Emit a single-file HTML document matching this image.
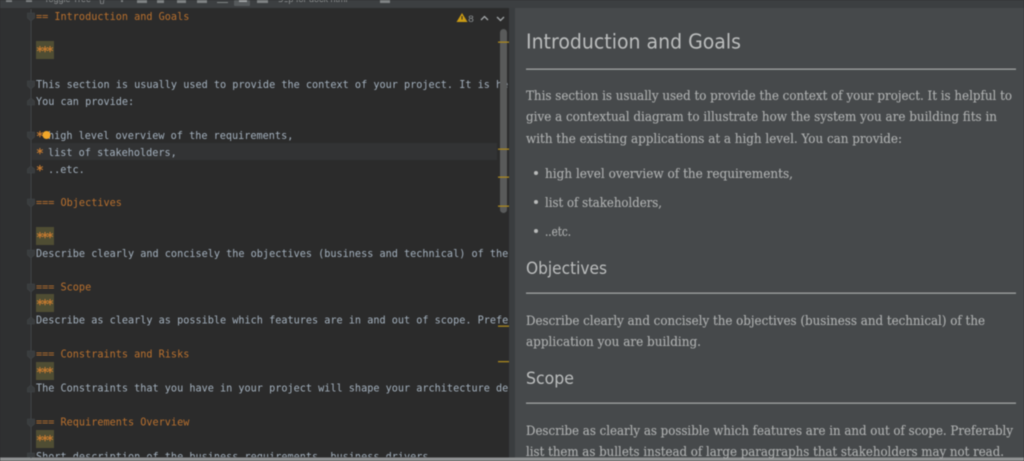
<!DOCTYPE html>
<html><head><meta charset="utf-8"><style>
html,body{margin:0;padding:0;background:#2b2b2b;width:1024px;height:461px;overflow:hidden}
svg{display:block;filter:blur(.5px)}
.m text{font-family:"DejaVu Sans Mono","Liberation Mono",monospace;font-size:10.2px;fill:#a3b0bd}
.m text.h{fill:#b8702e}
.m text.s{fill:#c47a30;font-size:13px;font-weight:bold}
.p{font-family:"DejaVu Serif","Liberation Serif",serif;font-size:13.4px;fill:#aeb0b0;stroke:#aeb0b0;stroke-width:.12px}
.t{font-family:"DejaVu Sans","Liberation Sans",sans-serif;fill:#bcbebe}
</style></head><body>
<svg width="1024" height="461" viewBox="0 0 1024 461" xmlns="http://www.w3.org/2000/svg">
<defs><clipPath id="c"><rect x="0" y="9" width="508.500" height="448"/></clipPath></defs>
<rect width="1024" height="461" fill="#2b2b2b"/>
<rect x="0" y="8" width="30" height="450" fill="#2f3031"/>
<rect x="0" y="0" width="1024" height="8" fill="#3c3f41"/>
<rect x="509" y="8" width="6" height="450" fill="#3a3d3f"/>
<rect x="515" y="8" width="509" height="450" fill="#46494b"/>
<rect x="0" y="457.500" width="1024" height="4" fill="#8f9192"/>
<!-- toolbar -->
<g fill="#7f8384">
<rect x="6" y="0" width="6" height="2"/><rect x="26" y="0" width="6" height="2"/>
<text x="44" y="2" font-family="Liberation Sans,sans-serif" font-size="9" fill="#8d9091">Toggle Tree</text>
<text x="99" y="2" font-family="Liberation Sans,sans-serif" font-size="9" fill="#8d9091">{}</text>
<rect x="121" y="0" width="2" height="2"/>
<rect x="137" y="0" width="10" height="3"/>
<rect x="157" y="0" width="7" height="3"/>
<rect x="177" y="0" width="9" height="3"/>
<rect x="197" y="0" width="10" height="3"/>
<rect x="217" y="2" width="11" height="1"/>
<rect x="234" y="0" width="16" height="6" rx="1" fill="#565a5c"/>
<rect x="239" y="0" width="8" height="2" fill="#a0a3a5"/>
<rect x="257" y="0" width="11" height="3"/>
<text x="278" y="2" font-family="Liberation Sans,sans-serif" font-size="9" fill="#8d9091">⎇p</text>
<text x="296" y="2" font-family="Liberation Sans,sans-serif" font-size="9" fill="#8d9091">for dock html</text>
<rect x="380" y="0" width="10" height="3"/>
</g>
<!-- editor -->
<rect x="32" y="143" width="465" height="17" fill="#323334"/>
<g fill="#4f4d33">
<rect x="36" y="41" width="18" height="18"/><rect x="36" y="227" width="18" height="18"/>
<rect x="36" y="294" width="18" height="18"/><rect x="36" y="362" width="18" height="18"/>
<rect x="36" y="430" width="18" height="18"/>
</g>
<line x1="31" y1="9" x2="31" y2="458" stroke="#43464a" stroke-width="1"/>
<g fill="#393c3e" stroke="#434648" stroke-width=".6">
<path d="M27.500 13h7v5l-3.500 3-3.500-3z"/><path d="M27.500 81h7v5l-3.500 3-3.500-3z"/>
<path d="M27.500 101l3.500-3 3.500 3v4h-7z"/><path d="M27.500 132h7v5l-3.500 3-3.500-3z"/>
<path d="M27.500 169l3.500-3 3.500 3v4h-7z"/><path d="M27.500 199h7v5l-3.500 3-3.500-3z"/>
<path d="M27.500 250h7v5l-3.500 3-3.500-3z"/><path d="M27.500 284h7v5l-3.500 3-3.500-3z"/>
<path d="M27.500 320l3.500-3 3.500 3v4h-7z"/><path d="M27.500 351h7v5l-3.500 3-3.500-3z"/>
<path d="M27.500 388l3.500-3 3.500 3v4h-7z"/><path d="M27.500 419h7v5l-3.500 3-3.500-3z"/>
<path d="M27.500 453h7v4h-7z"/>
</g>
<g class="m" clip-path="url(#c)">
<text class="h" x="36" y="20">== Introduction and Goals</text>
<text class="s" x="36" y="56" textLength="18" lengthAdjust="spacing">***</text>
<text x="36" y="88">This section is usually used to provide the context of your project. It is helpful to give a contextual</text>
<text x="36" y="105">You can provide:</text>
<text class="s" x="36" y="141">*</text><text x="48" y="139">high level overview of the requirements,</text>
<text class="s" x="36" y="158">*</text><text x="48" y="156">list of stakeholders,</text>
<text class="s" x="36" y="175">*</text><text x="48" y="173">..etc.</text>
<text class="h" x="36" y="206">=== Objectives</text>
<text class="s" x="36" y="242" textLength="18" lengthAdjust="spacing">***</text>
<text x="36" y="257">Describe clearly and concisely the objectives (business and technical) of the application</text>
<text class="h" x="36" y="290.500">=== Scope</text>
<text class="s" x="36" y="309" textLength="18" lengthAdjust="spacing">***</text>
<text x="36" y="323.500">Describe as clearly as possible which features are in and out of scope. Preferably list them</text>
<text class="h" x="36" y="357.500">=== Constraints and Risks</text>
<text class="s" x="36" y="377" textLength="18" lengthAdjust="spacing">***</text>
<text x="36" y="391.500">The Constraints that you have in your project will shape your architecture decisions and more</text>
<text class="h" x="36" y="425.500">=== Requirements Overview</text>
<text class="s" x="36" y="445" textLength="18" lengthAdjust="spacing">***</text>
<text x="36" y="460">Short description of the business requirements, business drivers</text>
</g>
<circle cx="46.500" cy="135" r="4" fill="#f2a72a"/>
<!-- inspection -->
<path d="M456.500 22l5.500-9 5.500 9z" fill="#c99a14"/><rect x="461.500" y="16" width="1" height="3.500" fill="#2b2b2b"/>
<text x="468" y="22" font-family="Liberation Mono,monospace" font-size="10" fill="#8b8f91">8</text>
<path d="M481 20l3.500-3.500 3.500 3.500M497 17l3.500 3.500 3.500-3.500" fill="none" stroke="#a2a6a8" stroke-width="1.300"/>
<!-- scrollbar -->
<rect x="500" y="29" width="7" height="184" rx="3.500" fill="#595a5a"/>
<g fill="#a9861f">
<rect x="498" y="41.500" width="11" height="1.300"/><rect x="498" y="148.500" width="11" height="1.300"/>
<rect x="498" y="176.500" width="11" height="1.300"/><rect x="498" y="205.500" width="11" height="1.300"/>
<rect x="498" y="325.500" width="11" height="1.300"/><rect x="498" y="361" width="11" height="1.300"/>
</g>
<!-- preview -->
<text class="t" x="526" y="48.500" font-size="20" textLength="215" lengthAdjust="spacingAndGlyphs">Introduction and Goals</text>
<rect x="526" y="68.500" width="490" height="1.300" fill="#a0a2a2"/>
<g class="p">
<text x="526" y="100" textLength="486" lengthAdjust="spacingAndGlyphs">This section is usually used to provide the context of your project. It is helpful to</text>
<text x="526" y="121" textLength="471" lengthAdjust="spacingAndGlyphs">give a contextual diagram to illustrate how the system you are building fits in</text>
<text x="526" y="143" textLength="376" lengthAdjust="spacingAndGlyphs">with the existing applications at a high level. You can provide:</text>
<text x="545" y="178" textLength="248" lengthAdjust="spacingAndGlyphs">high level overview of the requirements,</text>
<text x="545" y="207" textLength="117" lengthAdjust="spacingAndGlyphs">list of stakeholders,</text>
<text x="545" y="236" textLength="26" lengthAdjust="spacingAndGlyphs">..etc.</text>
<text x="526" y="325" textLength="459" lengthAdjust="spacingAndGlyphs">Describe clearly and concisely the objectives (business and technical) of the</text>
<text x="526" y="346" textLength="175" lengthAdjust="spacingAndGlyphs">application you are building.</text>
<text x="526" y="435" textLength="487" lengthAdjust="spacingAndGlyphs">Describe as clearly as possible which features are in and out of scope. Preferably</text>
<text x="526" y="456" textLength="478" lengthAdjust="spacingAndGlyphs">list them as bullets instead of large paragraphs that stakeholders may not read.</text>
</g>
<g fill="#b8baba"><circle cx="536" cy="173" r="2"/><circle cx="536" cy="202" r="2"/><circle cx="536" cy="231" r="2"/></g>
<text class="t" x="526" y="274" font-size="16.500" textLength="81" lengthAdjust="spacingAndGlyphs">Objectives</text>
<rect x="526" y="292.500" width="490" height="1.300" fill="#a0a2a2"/>
<text class="t" x="526" y="384" font-size="16.500" textLength="48" lengthAdjust="spacingAndGlyphs">Scope</text>
<rect x="526" y="402.500" width="490" height="1.300" fill="#a0a2a2"/>
</svg>
</body></html>
